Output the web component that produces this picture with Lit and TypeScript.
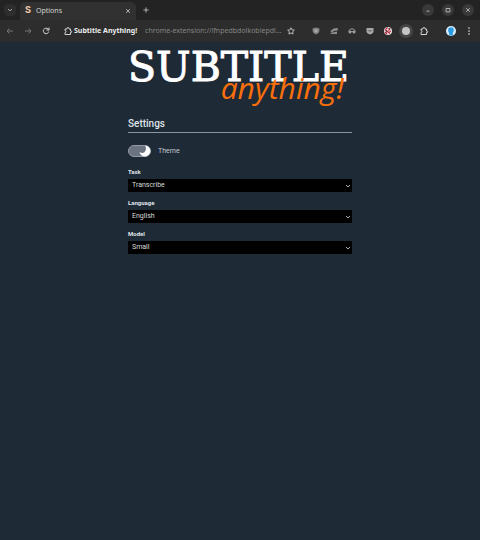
import { LitElement, html, css, svg } from "lit";
import { customElement, property } from "lit/decorators.js";

const glyphs: Record<string, unknown> = {
  back: svg`<path d="M14 8H2M7 3L2 8l5 5"/>`,
  forward: svg`<path d="M2 8h12M9 3l5 5-5 5"/>`,
  reload: svg`<path d="M13.500 9a5.500 5.500 0 1 1-1.500-5l1.500 2M14 1v5H9"/>`,
  chevron: svg`<path d="M3 5.500l5 5 5-5"/>`,
  close: svg`<path d="M3 3l10 10M13 3L3 13"/>`,
  plus: svg`<path d="M8 1v14M1 8h14"/>`,
  minimize: svg`<path d="M4 11h8"/>`,
  maximize: svg`<path d="M3 4h10v9H3z"/>`,
  puzzle: svg`<path d="M2 4h4V3a2 2 0 0 1 4 0v1h3v4h1a1.500 1.500 0 0 1 0 3h-1v4H2v-4a2 2 0 0 0 0-4z"/>`,
  star: svg`<path stroke-width="1.600" d="M8 1.500l2 4.300 4.700.5-3.500 3.200 1 4.700L8 11.800l-4.200 2.400 1-4.700L1.300 6.300 6 5.800z"/>`,
  shield: svg`<path fill="#8d8f90" stroke="#777" d="M2 3l6-1 6 1v5c0 3-3 5-6 6-3-1-6-3-6-6z"/><path stroke="#b0b0b0" d="M5 6h6M6 9h4"/>`,
  cards: svg`<path fill="#8b8d8e" stroke="none" d="M1 8l6-5 9-1-1 5-7 1-5 4z"/><path fill="#8b8d8e" stroke="none" d="M0 14l5-3 9-2v5z"/>`,
  mask: svg`<path stroke="#999b9c" d="M1 9c2-7 12-7 14 0M6 9h4"/><circle cx="4" cy="10" r="3" fill="#999b9c" stroke="none"/><circle cx="12" cy="10" r="3" fill="#999b9c" stroke="none"/>`,
  badge: svg`<path fill="#a5a7a8" stroke="none" d="M1 2h14v7c0 3-4 5-7 6-3-1-7-3-7-6z"/><path stroke="#555" d="M5 6l3 3 3-3"/>`,
  blocker: svg`<circle cx="8" cy="8" r="8" fill="#eadfe0" stroke="none"/><path stroke="#b3263a" stroke-width="2.500" d="M2 5l10 8M12 3L9 7M7 1L4 4M2 10l4 4M14 8l-3 1"/><path stroke="#343434" stroke-width="1.500" d="M9 3h4M5 7v4"/>`,
  disc: svg`<circle cx="8" cy="8" r="8" fill="#c4c4c4" stroke="none"/>`,
  profile: svg`<circle cx="8" cy="8" r="8" fill="#dbeefa" stroke="none"/><path fill="#2b9be2" stroke="none" d="M8 2c6 0 5 7 3 9v4H5v-4C3 9 2 2 8 2z"/>`,
  more: svg`<g fill="currentColor" stroke="none"><circle cx="8" cy="2" r="1.700"/><circle cx="8" cy="8" r="1.700"/><circle cx="8" cy="14" r="1.700"/></g>`,
};

@customElement("ui-icon")
export class UiIcon extends LitElement {
  static styles = css`
    :host { display: block; flex: none; width: 8px; height: 8px; }
    .glyph { display: block; width: 100%; height: 100%; fill: none; stroke: currentColor; stroke-width: 2; overflow: visible; }
  `;
  @property() name = "";
  render() {
    return html`<svg class="glyph" viewBox="0 0 16 16" aria-hidden="true">${glyphs[this.name]}</svg>`;
  }
}

@customElement("browser-bar")
export class BrowserBar extends LitElement {
  static styles = css`
    :host { display: block; background: #222322; color: #d5d5d5; font-family: "Noto Sans", sans-serif; font-size: 7px; line-height: 10px; }
    button { all: unset; display: grid; place-items: center; flex: none; }
    .row { display: flex; align-items: center; }
    .tabs { height: 20px; padding: 0 6px 0 4px; box-sizing: border-box; }
    .list { width: 12px; height: 12px; border-radius: 4px; background: #2c2d2c; }
    .list ui-icon { width: 6px; height: 6px; }
    .tab { display: flex; align-items: center; gap: 5px; flex: 0 1 116px; height: 18px; margin: 2px 0 0 4px; padding: 0 5px; box-sizing: border-box; border-radius: 5px 5px 0 0; background: #303130; }
    .fav { width: 6px; font: bold 10px/10px "Liberation Mono", monospace; color: #f0c9aa; }
    .name { flex: 1; }
    .tiny { width: 6px; height: 6px; }
    .new { width: 12px; height: 12px; margin-left: 4px; }
    .new ui-icon { width: 6px; height: 6px; }
    .wins { display: flex; gap: 8px; margin-left: auto; }
    .win { width: 12px; height: 12px; border-radius: 6px; background: #383938; }
    .win ui-icon { width: 6px; height: 6px; }
    .tools { height: 22px; padding: 0 7px 0 6px; box-sizing: border-box; background: #2c2d2c; }
    .nav { display: flex; gap: 10px; flex: none; }
    .dim { color: #777; }
    .addr { display: flex; align-items: center; flex: 1; min-width: 0; margin-left: 14px; }
    .ext { font-weight: 700; color: #ededed; margin: 0 8px 0 2px; white-space: nowrap; }
    .url { flex: 1; color: #858585; white-space: nowrap; }
    .exts { display: flex; gap: 4px; margin-left: 14px; }
    .slot { width: 14px; height: 14px; border-radius: 7px; }
    .on { background: #454645; }
    .me { width: 10px; height: 10px; margin-left: 15px; }
    .me ui-icon { width: 10px; height: 10px; }
    .menu { margin-left: 9px; }
  `;
  render() {
    return html`
      <div class="row tabs">
        <button class="list" aria-label="Search tabs"><ui-icon name="chevron"></ui-icon></button>
        <div class="tab">
          <span class="fav">S</span><span class="name">Options</span>
          <button aria-label="Close tab"><ui-icon class="tiny" name="close"></ui-icon></button>
        </div>
        <button class="new" aria-label="New tab"><ui-icon name="plus"></ui-icon></button>
        <div class="wins">
          ${["minimize", "maximize", "close"].map((n) => html`<button class="win" aria-label=${n}><ui-icon name=${n}></ui-icon></button>`)}
        </div>
      </div>
      <div class="row tools">
        <div class="nav">
          <button class="dim" aria-label="Back"><ui-icon name="back"></ui-icon></button>
          <button class="dim" aria-label="Forward"><ui-icon name="forward"></ui-icon></button>
          <button aria-label="Reload"><ui-icon name="reload"></ui-icon></button>
        </div>
        <div class="addr">
          <ui-icon name="puzzle"></ui-icon>
          <span class="ext">Subtitle Anything!</span>
          <span class="url">chrome-extension://lfnpedbdolkoblepdl...</span>
          <button aria-label="Bookmark"><ui-icon name="star"></ui-icon></button>
        </div>
        <div class="exts">
          ${["shield", "cards", "mask", "badge", "blocker", "disc", "puzzle"].map(
            (n) => html`<button class="slot ${n === "disc" ? "on" : ""}" aria-label=${n}><ui-icon name=${n}></ui-icon></button>`,
          )}
        </div>
        <button class="me" aria-label="Profile"><ui-icon name="profile"></ui-icon></button>
        <button class="menu" aria-label="Menu"><ui-icon name="more"></ui-icon></button>
      </div>
    `;
  }
}

const fields = [
  { id: "task", label: "Task", options: ["Transcribe", "Translate"] },
  { id: "language", label: "Language", options: ["English", "Spanish"] },
  { id: "model", label: "Model", options: ["Small", "Medium"] },
];

@customElement("app-root")
export class AppRoot extends LitElement {
  static styles = css`
    :host { display: block; min-height: 100vh; background: #1f2a37; color: #dfe3e8; font-family: Roboto, sans-serif; }
    main { width: 46%; min-width: 224px; margin: 0 auto; max-width: 640px; }
    .logo { position: relative; height: 68px; padding-top: 5px; box-sizing: border-box; margin: 0; white-space: nowrap; }
    .word { display: block; font: 400 41px/40px "DejaVu Serif", serif; color: #fff; -webkit-text-stroke: 1px #fff; }
    .script { position: absolute; right: 8px; top: 28px; font: italic 500 30px/36px "Open Sans", sans-serif; color: #f96f0a; }
    h2 { margin: 0; padding: 8px 0 2px; font-size: 10px; line-height: 12px; font-weight: 500; border-bottom: 1px solid #8b949f; }
    .theme { display: flex; align-items: center; gap: 7px; margin: 11px 0 10px; height: 14px; font-size: 7px; color: #c3c8cf; }
    .switch { appearance: none; width: 23px; height: 12px; margin: 0; box-sizing: border-box; border: 1px solid #939aa5; border-radius: 6px; background: #6b7280; }
    .knob { display: flex; position: relative; }
    .moon { position: absolute; right: 0; top: 0; width: 12px; height: 12px; pointer-events: none; }
    .field { margin-bottom: 7px; }
    .field label { display: block; padding-bottom: 3px; font-size: 6px; line-height: 8px; font-weight: 700; }
    select { appearance: none; display: block; width: 100%; height: 13px; padding: 0 4px; border: 0; border-radius: 0; background: #000; color: #dcdcdc; font: 7px/13px Roboto, sans-serif; }
    .box { display: grid; align-items: center; }
    .box select, .box ui-icon { grid-area: 1 / 1; }
    .box ui-icon { justify-self: end; width: 6px; height: 6px; margin-right: 1px; color: #fff; pointer-events: none; }
  `;
  render() {
    return html`
      <browser-bar></browser-bar>
      <main>
        <h1 class="logo"><span class="word">SUBTITLE</span><span class="script">anything!</span></h1>
        <h2>Settings</h2>
        <label class="theme">
          <span class="knob">
            <input class="switch" type="checkbox" role="switch" checked />
            <svg class="moon" viewBox="0 0 24 24" aria-hidden="true"><path fill="#fff" d="M12 1A11 11 0 1 1 1 14C6 17 10 16 12 13S15 5 12 1z"/></svg>
          </span>
          Theme
        </label>
        ${fields.map(
          (f) => html`<div class="field">
            <label for=${f.id}>${f.label}</label>
            <div class="box">
              <select id=${f.id}>${f.options.map((o) => html`<option>${o}</option>`)}</select>
              <ui-icon name="chevron"></ui-icon>
            </div>
          </div>`,
        )}
      </main>
    `;
  }
}
